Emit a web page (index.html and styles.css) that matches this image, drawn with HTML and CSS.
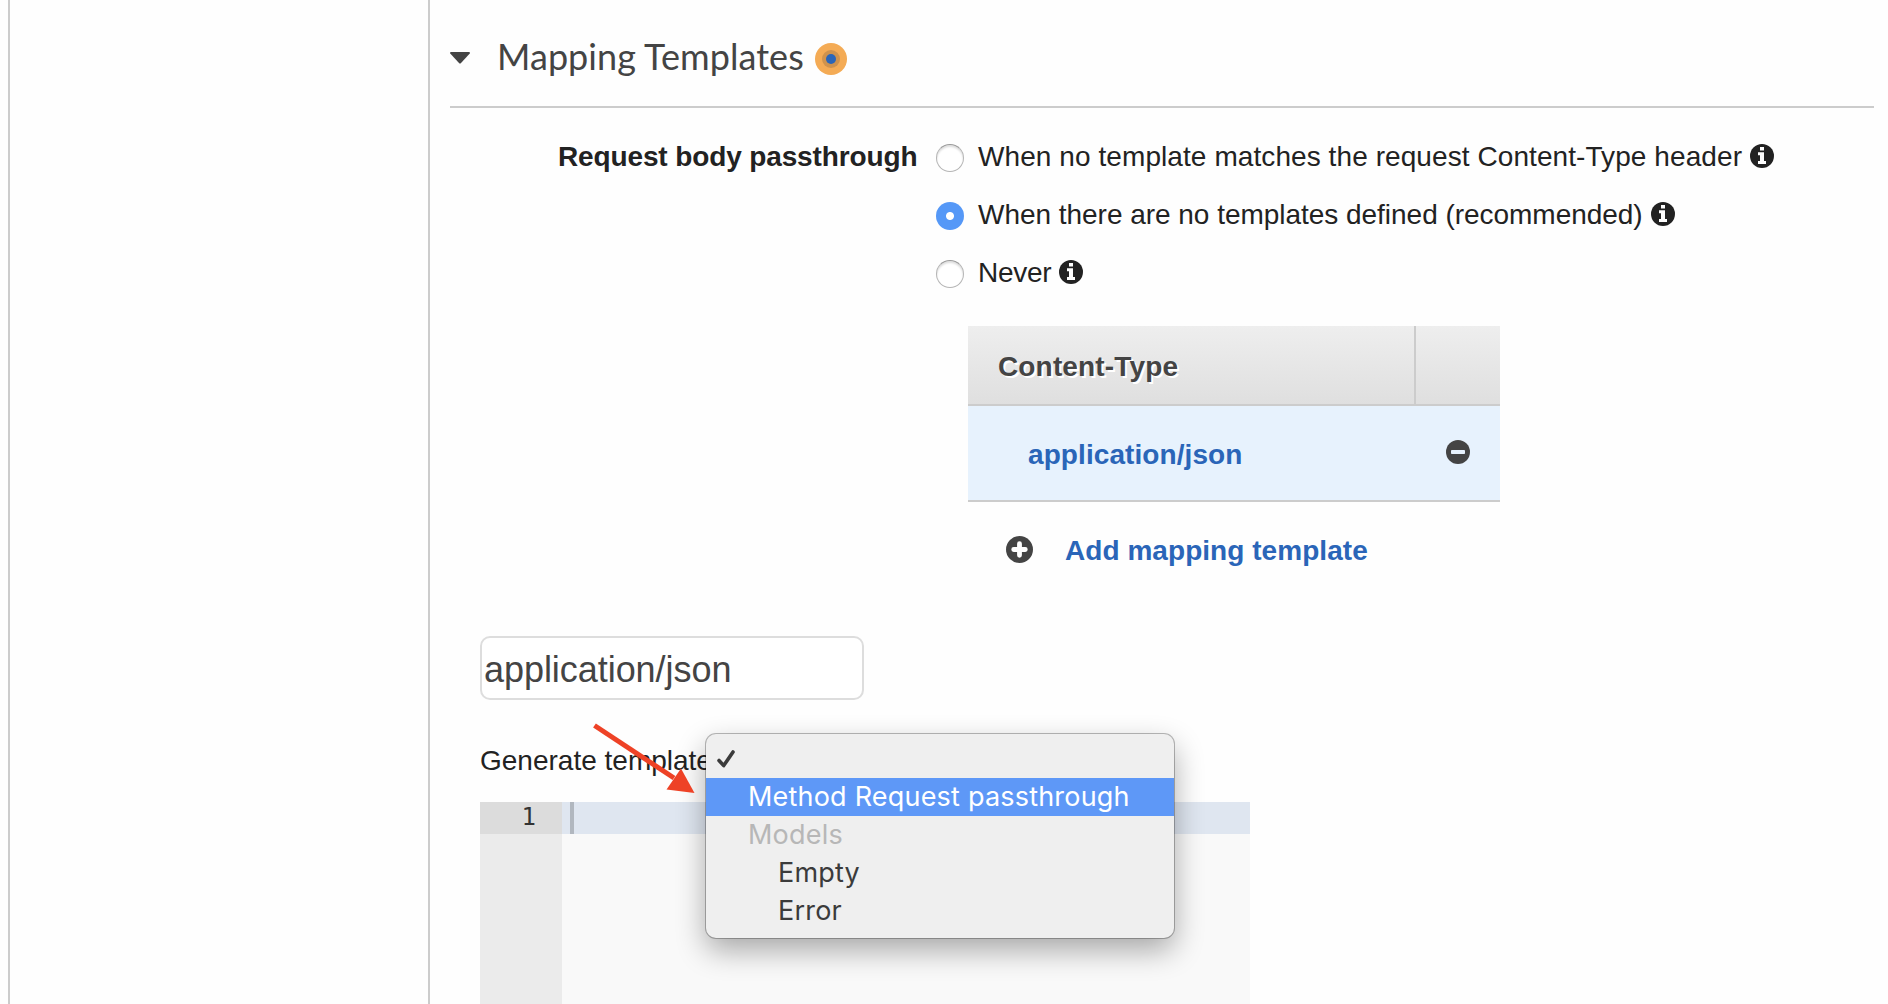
FILE: index.html
```html
<!DOCTYPE html>
<html lang="en">
<head>
<meta charset="utf-8">
<title>Mapping Templates</title>
<link rel="stylesheet" href="styles.css">
</head>
<body>
<svg class="sprite" aria-hidden="true">
  <symbol id="info" viewBox="0 0 24 24">
    <circle cx="12" cy="12" r="12" fill="#222"/>
    <path fill="#fefefe" d="M10 3h4v3.600h-4zM8 8.300h6V17h2v3H8v-3h2v-5.700H8z"/>
  </symbol>
</svg>
<div class="layout">
  <aside class="side"></aside>
  <main class="main">
    <header class="heading">
      <svg class="caret" viewBox="0 0 20 12"><path fill="#444" d="M1 0h18q1 0 1 1.200L11 11q-1 1-2 0L0 1.200Q0 0 1 0z"/></svg>
      <h1 class="title">Mapping Templates</h1>
      <svg class="beacon" viewBox="0 0 32 32"><circle cx="16" cy="16" r="16" fill="#f4ab55"/><circle cx="16" cy="16" r="9" fill="#cf924d"/><circle cx="16" cy="16" r="5" fill="#2a65b8"/></svg>
    </header>

    <section class="passthrough">
      <div class="label">Request body passthrough</div>
      <div class="options">
        <div class="option no-match"><span class="radio"></span><span>When no template matches the request Content-Type header</span><svg class="info"><use href="#info"/></svg></div>
        <div class="option none-defined"><span class="radio on"></span><span>When there are no templates defined (recommended)</span><svg class="info"><use href="#info"/></svg></div>
        <div class="option never"><span class="radio"></span><span>Never</span><svg class="info"><use href="#info"/></svg></div>
      </div>
    </section>

    <section class="types">
      <div class="types-head"><div class="th">Content-Type</div></div>
      <div class="types-row"><span>application/json</span>
        <svg class="minus" viewBox="0 0 24 24"><circle cx="12" cy="12" r="12" fill="#444"/><rect x="5" y="10" width="14" height="4" rx=".8" fill="#e7f2fd"/></svg>
      </div>
      <div class="add">
        <svg class="plus" viewBox="0 0 28 28"><circle cx="14" cy="14" r="14" fill="#444"/><path stroke="#fefefe" stroke-width="5" stroke-linecap="round" d="M14 8v12M8 14h12"/></svg>
        <span>Add mapping template</span>
      </div>
    </section>

    <section class="template">
      <div class="input">application/json</div>
      <div class="generate">Generate template
        <div class="menu">
          <div class="item checked"><svg class="check" viewBox="0 0 18 18"><path fill="none" stroke="#3b3b3b" stroke-width="3.600" stroke-linecap="round" stroke-linejoin="round" d="M2 10.500L6.700 15.600L16 2"/></svg></div>
          <div class="item active">Method Request passthrough</div>
          <div class="item group">Models</div>
          <div class="item nested">Empty</div>
          <div class="item nested">Error</div>
        </div>
        <svg class="arrow" viewBox="0 0 110 76"><path stroke="#ee4226" stroke-width="5" d="M6.500 7.500L86 60"/><path fill="#ee4226" d="M106.500 75L93 50.500L78.500 71.500z"/></svg>
      </div>
      <div class="editor">
        <div class="gutter"><div class="line-no">1</div></div>
        <div class="code"><div class="line"><span class="cursor"></span></div></div>
      </div>
    </section>
  </main>
</div>
</body>
</html>
```
FILE: styles.css
```css
* { box-sizing: border-box; }

body {
  margin: 0;
  background: #fefefe;
  color: #222;
  font: 28px/32px "Liberation Sans", Arial, sans-serif;
  overflow: hidden;
}

.sprite { display: none; }

svg { display: block; flex: none; }

.layout {
  display: flex;
  height: 1004px;
  padding-left: 8px;
  overflow: hidden;
}

.side {
  flex: none;
  width: 422px;
  border: solid #ccc;
  border-width: 0 2px;
}

.main {
  flex: 1;
  padding: 0 14px 0 20px;
  white-space: nowrap;
}

.heading {
  display: flex;
  align-items: center;
  height: 108px;
  padding-top: 10px;
  border-bottom: 2px solid #ccc;
}

.caret { width: 20px; height: 12px; }

.title {
  margin: -4px 12px 0 27px;
  width: 306px;
  color: #444;
  font: 400 36px/44px Lato, sans-serif;
  letter-spacing: .05px;
}

.beacon { width: 32px; height: 32px; margin-top: 2px; }

.passthrough {
  display: flex;
  gap: 18px;
  padding-top: 33px;
}

.label {
  width: 468px;
  height: 32px;
  padding-left: 108px;
  font-weight: bold;
  letter-spacing: -.13px;
}

.option {
  display: flex;
  align-items: center;
  height: 32px;
  margin-bottom: 26px;
}

.option.no-match { letter-spacing: .08px; }
.option.none-defined { letter-spacing: -.03px; }
.option.never { letter-spacing: -.3px; }

.radio {
  width: 28px;
  height: 28px;
  margin: 2px 14px 0 0;
  border: 1px solid #b5b5b5;
  border-top-color: #999;
  border-radius: 50%;
  background: #fff;
  box-shadow: inset 0 2px 2px #0002;
}

.radio.on {
  border: 0;
  background: radial-gradient(circle, #fff 0 3.5px, #5598f7 4.5px);
  box-shadow: none;
}

.info { width: 24px; height: 24px; margin: -2px 0 0 8px; }

.types {
  width: 532px;
  margin-left: 518px;
  padding-top: 11px;
}

.types-head {
  display: flex;
  height: 80px;
  border-bottom: 2px solid #ccc;
  background: linear-gradient(#eee, #dfdfdf);
  color: #444;
  font-weight: bold;
  letter-spacing: .15px;
  text-shadow: 2px 2px 0 #fff;
}

.th {
  width: 448px;
  padding: 25px 0 0 30px;
  border-right: 2px solid #ccc;
}

.types-row {
  display: flex;
  align-items: center;
  justify-content: space-between;
  height: 96px;
  padding: 3px 30px 0 60px;
  border-bottom: 2px solid #ccc;
  background: #e7f2fd;
  color: #2a65b8;
  font-weight: bold;
  letter-spacing: .08px;
}

.minus { width: 24px; height: 24px; margin-top: -6px; }

.add {
  display: flex;
  align-items: center;
  gap: 32px;
  margin-top: 33px;
  padding-left: 38px;
  color: #2a65b8;
  font-weight: bold;
  letter-spacing: .05px;
}

.plus { width: 27px; height: 27px; margin-top: -4px; }

.template { padding: 69px 0 0 30px; }

.input {
  width: 384px;
  height: 64px;
  padding: 10px 2px;
  border: 2px solid #ddd;
  border-radius: 10px;
  background: #fff;
  color: #444;
  font-size: 36px;
  line-height: 44px;
  letter-spacing: -.05px;
}

.generate {
  position: relative;
  height: 32px;
  margin: 45px 0 25px;
}

.menu {
  position: absolute;
  z-index: 1;
  left: 226px;
  top: -11px;
  width: 468px;
  height: 204px;
  padding-top: 6px;
  border-radius: 10px;
  background: #efefef;
  box-shadow: 0 0 0 1px #0004, 0 12px 30px #0005;
  color: #3b3b3b;
  font: 27px/38px Inter, sans-serif;
  letter-spacing: .2px;
}

.item { height: 38px; padding-left: 42px; }
.item.checked { padding: 10px 0 0 11px; }
.item.active { background: #5e98f7; color: #fff; }
.item.group { color: #b7b7b7; }
.item.nested { padding-left: 72px; }

.check { width: 18px; height: 18px; }

.arrow {
  position: absolute;
  z-index: 2;
  left: 108px;
  top: -27px;
  width: 110px;
  height: 76px;
}

.editor {
  display: flex;
  width: 770px;
  height: 202px;
  background: #f9f9f9;
}

.gutter { width: 82px; background: #ebebeb; }

.line-no {
  height: 32px;
  padding-right: 26px;
  background: #dcdcdc;
  color: #333;
  font: 24px/31px "DejaVu Sans Mono", monospace;
  text-align: right;
}

.code { flex: 1; }

.line {
  height: 32px;
  padding-left: 8px;
  background: #dfe6f0;
}

.cursor {
  display: block;
  width: 4px;
  height: 32px;
  background: #b1b7bf;
}
```
